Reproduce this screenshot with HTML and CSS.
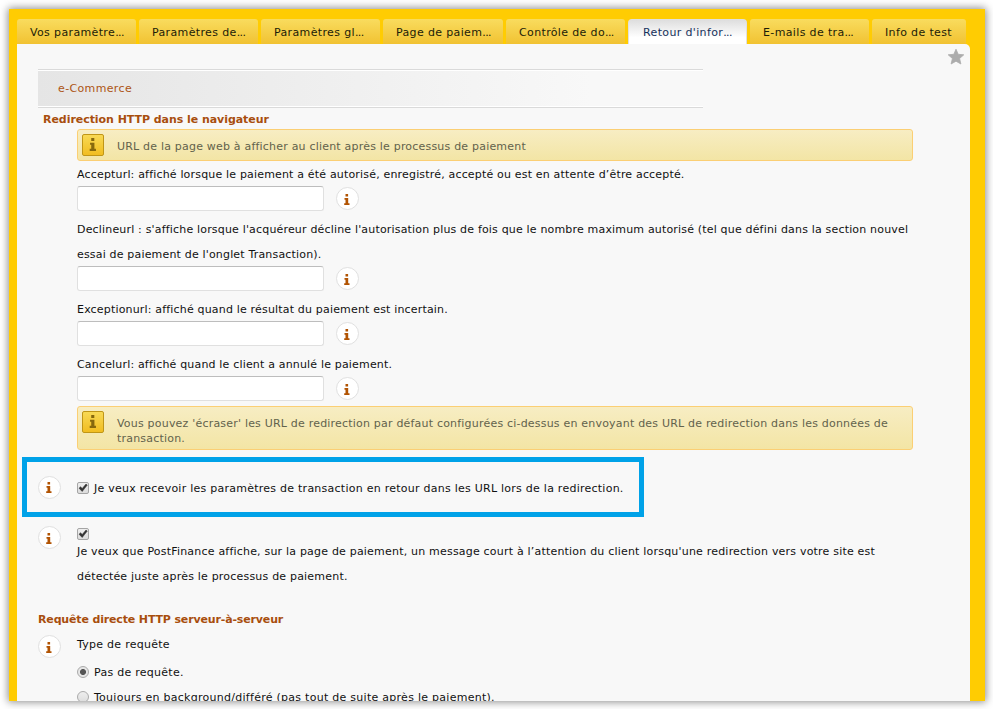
FILE: index.html
```html
<!DOCTYPE html>
<html lang="fr">
<head>
<meta charset="utf-8">
<title>Retour d'information</title>
<link rel="stylesheet" href="styles.css">
</head>
<body>
<svg width="0" height="0" class="defs">
  <symbol id="i" viewBox="0 0 6 11"><path d="M1.5 0h2.6v2.6H1.5zM.5 4h3.7v5.2h1.3V11H.2V9.2h1.3V5.8h-1z"/></symbol>
  <symbol id="tick" viewBox="0 0 12 12"><path d="M2 6.2 3.6 4.7 5.2 6.5 9 2l1.3 1.1L5.2 9.5z"/></symbol>
</svg>
<div class="frame">
  <nav class="tabs">
    <a class="tab">Vos paramètre<span class="dots">...</span></a>
    <a class="tab">Paramètres de<span class="dots">...</span></a>
    <a class="tab">Paramètres gl<span class="dots">...</span></a>
    <a class="tab wide">Page de paiem<span class="dots">...</span></a>
    <a class="tab">Contrôle de do<span class="dots">...</span></a>
    <a class="tab active">Retour d'infor<span class="dots">...</span></a>
    <a class="tab">E-mails de tra<span class="dots">...</span></a>
    <a class="tab last">Info de test</a>
  </nav>
  <main class="panel">
    <svg class="star" viewBox="0 0 18 18"><path d="M9 1.2 11.2 6.3 16.8 6.8 12.6 10.5 13.9 16 9 13.2 4.1 16 5.4 10.5 1.2 6.8 6.8 6.3z"/></svg>
    <div class="band">e-Commerce</div>
    <h2 class="first">Redirection HTTP dans le navigateur</h2>
    <section class="fields">
      <div class="note"><span class="badge"><svg><use href="#i"/></svg></span><p>URL de la page web à afficher au client après le processus de paiement</p></div>
      <div class="field"><label>Accepturl: affiché lorsque le paiement a été autorisé, enregistré, accepté ou est en attente d’être accepté.</label>
        <div class="entry"><input type="text"><span class="info"><svg><use href="#i"/></svg></span></div></div>
      <div class="field"><label>Declineurl : s'affiche lorsque l'acquéreur décline l'autorisation plus de fois que le nombre maximum autorisé (tel que défini dans la section nouvel<br>essai de paiement de l'onglet Transaction).</label>
        <div class="entry"><input type="text"><span class="info"><svg><use href="#i"/></svg></span></div></div>
      <div class="field"><label>Exceptionurl: affiché quand le résultat du paiement est incertain.</label>
        <div class="entry"><input type="text"><span class="info"><svg><use href="#i"/></svg></span></div></div>
      <div class="field"><label>Cancelurl: affiché quand le client a annulé le paiement.</label>
        <div class="entry"><input type="text"><span class="info"><svg><use href="#i"/></svg></span></div></div>
      <div class="note tall"><span class="badge"><svg><use href="#i"/></svg></span><p>Vous pouvez 'écraser' les URL de redirection par défaut configurées ci-dessus en envoyant des URL de redirection dans les données de<br>transaction.</p></div>
    </section>
    <div class="highlight"><span class="info"><svg><use href="#i"/></svg></span><span class="check"><svg><use href="#tick"/></svg></span><span class="t">Je veux recevoir les paramètres de transaction en retour dans les URL lors de la redirection.</span></div>
    <div class="row message"><span class="info"><svg><use href="#i"/></svg></span>
      <div><span class="check"><svg><use href="#tick"/></svg></span><p>Je veux que PostFinance affiche, sur la page de paiement, un message court à l’attention du client lorsqu'une redirection vers votre site est<br>détectée juste après le processus de paiement.</p></div></div>
    <h2 class="second">Requête directe HTTP serveur-à-serveur</h2>
    <div class="row request"><span class="info"><svg><use href="#i"/></svg></span>
      <div><p>Type de requête</p>
        <div class="option"><span class="radio on"></span><span class="t">Pas de requête.</span></div>
        <div class="option"><span class="radio"></span><span class="t">Toujours en background/différé (pas tout de suite après le paiement).</span></div></div></div>
  </main>
</div>
</body>
</html>
```
FILE: styles.css
```css
* { box-sizing: border-box; }
body {
  margin: 0;
  height: 709px;
  padding: 9px;
  overflow: hidden;
  background: #fff;
  color: #111;
  font: 11px/25px Verdana, "DejaVu Sans", sans-serif;
  letter-spacing: .2px;
  white-space: nowrap;
}
p, h2 { margin: 0; }
.defs { display: none; }
.frame {
  width: 976px;
  height: 692px;
  padding: 10px 8px 0;
  background: #ffcc02;
  box-shadow: 0 0 8px 1px rgba(0, 0, 0, .45);
}
.tabs { display: flex; gap: 3px; height: 25px; letter-spacing: .36px; }
.tab {
  width: 119px;
  height: 25px;
  padding-left: 13px;
  line-height: 27px;
  border-radius: 3px 3px 0 0;
  background: linear-gradient(#f9dc5e, #f1c232);
  color: #1c1c08;
}
.dots { letter-spacing: -.6px; }
.tab.wide { width: 120px; }
.tab.last { width: 94px; }
.tab.active {
  position: relative;
  height: 26px;
  padding-left: 14px;
  line-height: 25px;
  border: 1px solid #e0e0e0;
  border-bottom: 0;
  border-radius: 4px 4px 0 0;
  background: linear-gradient(#dedede, #fff 70%);
  color: #16325c;
}
.panel {
  position: relative;
  width: 953px;
  height: 657px;
  padding-top: 25px;
  overflow: hidden;
  border-top-right-radius: 5px;
  background: #f8f8f8;
}
.star { position: absolute; right: 5px; top: 4px; width: 18px; height: 18px; fill: #acacac; stroke: #acacac; stroke-width: .8; stroke-linejoin: round; }
.band {
  width: 665px;
  height: 39px;
  margin-left: 21px;
  padding-left: 20px;
  line-height: 37px;
  border: solid #dadada;
  border-width: 1px 0;
  box-shadow: inset 0 1px #fff, inset 0 -1px #fff;
  background: linear-gradient(90deg, #e5e5e5, #f8f8f8 83%);
  color: #ad5514;
  letter-spacing: .36px;
}
h2 { font-size: 11px; letter-spacing: -.05px; color: #a84e0e; }
h2.first { height: 21px; line-height: 24px; margin-left: 26px; }
.fields { width: 836px; margin-left: 60px; }
.note {
  display: flex;
  gap: 13px;
  height: 32px;
  padding: 4px;
  border: 1px solid #fbcf74;
  border-radius: 3px;
  background: linear-gradient(#f7edc3, #f3e5a5);
  color: #62624c;
}
.note p { padding-top: 5px; line-height: 15px; }
.note.tall { height: 44px; }
.badge {
  display: grid;
  flex: none;
  place-items: center;
  width: 22px;
  height: 22px;
  border: 1px solid #c09616;
  border-radius: 2px;
  background: linear-gradient(#f8d954, #f1bd21);
}
.badge svg { width: 8px; height: 13px; margin-top: -2px; fill: #86680d; }
.field { padding-bottom: 5px; }
.field label { display: block; position: relative; top: 1px; letter-spacing: .175px; }
.entry { display: flex; gap: 12px; height: 25px; }
input {
  width: 247px;
  height: 25px;
  margin: 0;
  border: 1px solid #e0e0e0;
  border-top-color: #bdbdbd;
  border-radius: 3px;
  background: #fff;
}
.info {
  display: grid;
  flex: none;
  place-items: center;
  width: 23px;
  height: 23px;
  margin-top: 1px;
  border: 1px solid #e0e0e0;
  border-radius: 50%;
  background: #fff;
}
.info svg { width: 6px; height: 11px; margin: 1px 1px 0 0; fill: #b15302; }
.highlight {
  display: flex;
  align-items: center;
  width: 622px;
  height: 60px;
  margin: 7px 0 0 5px;
  padding-left: 11px;
  border: 5px solid #00a2e8;
}
.highlight .info { margin: 0 16px 0 0; }
.highlight .check { margin-top: 1px; }
.highlight .t { margin: 2px 0 0 5px; letter-spacing: .25px; }
.check {
  display: block;
  flex: none;
  width: 12px;
  height: 12px;
  border: 1px solid #a5a5a5;
  border-radius: 2px;
  background: linear-gradient(#eee, #dcdcdc);
}
.check svg { display: block; width: 12px; height: 12px; margin: -1px; fill: #333; stroke: #333; stroke-width: .5; }
.row { display: flex; gap: 16px; padding-left: 21px; }
.message { padding-top: 8px; height: 90px; }
.message .check { margin: 3px 0 -1px; }
h2.second { height: 25px; margin-left: 21px; letter-spacing: -.15px; }
.request { letter-spacing: .27px; }
.request .info { margin-top: 3px; }
.request p { height: 28px; }
.option { display: flex; align-items: center; gap: 5px; height: 25px; }
.radio { width: 12px; height: 12px; margin-top: -1px; border: 1px solid #aaa; border-radius: 50%; background: linear-gradient(#eee, #ddd); }
.radio.on { background: radial-gradient(circle, #555 0 2.6px, #e6e6e6 3.4px); }
```
